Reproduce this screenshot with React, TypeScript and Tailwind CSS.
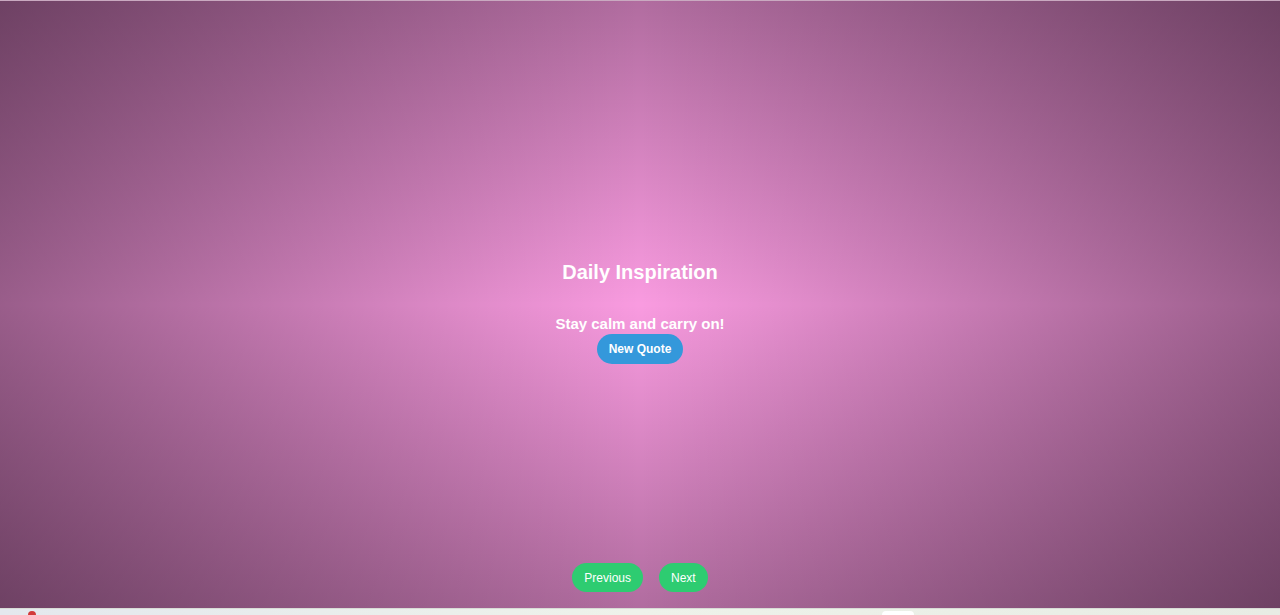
import React, { useState } from 'react';

const QUOTES = [
  'Stay calm and carry on!',
  'Every day is a fresh start.',
  'Believe you can and you are halfway there.',
];

export default function App() {
  const [index, setIndex] = useState(0);

  const nextQuote = () => setIndex((index + 1) % QUOTES.length);
  const prevQuote = () => setIndex((index - 1 + QUOTES.length) % QUOTES.length);

  return (
    <div className="h-[615px] w-full flex flex-col overflow-hidden font-['Liberation_Sans',Arial,sans-serif]">
      {/* Page */}
      <div className="flex-1 flex flex-col items-center border-t border-[#c9a9c0] bg-[#f99be0] bg-[linear-gradient(90deg,rgba(10,0,10,0.4),rgba(10,0,10,0)_50%,rgba(10,0,10,0.4)),linear-gradient(180deg,rgba(10,0,10,0.3),rgba(10,0,10,0)_50%,rgba(10,0,10,0.3))]">
        <h1 className="mt-[259px] text-[20px] leading-6 font-bold text-white">Daily Inspiration</h1>

        <p className="mt-[30px] text-[15px] leading-5 font-bold text-white">{QUOTES[index]}</p>

        <button
          onClick={nextQuote}
          className="h-[30px] px-3 rounded-full bg-[#3498db] text-white text-[12px] font-bold"
        >
          New Quote
        </button>

        {/* Navigation */}
        <div className="mt-auto mb-[16px] flex gap-4">
          <button
            onClick={prevQuote}
            className="h-[29px] px-[12px] rounded-full bg-[#2ecc71] text-white text-[12px]"
          >
            Previous
          </button>
          <button
            onClick={nextQuote}
            className="h-[29px] px-[12px] rounded-full bg-[#2ecc71] text-white text-[12px]"
          >
            Next
          </button>
        </div>
      </div>

      {/* Taskbar strip */}
      <div className="h-[7px] relative border-t border-[#d8dcd6] bg-[linear-gradient(90deg,#e4e8ee,#eef2ea_50%,#e8ece4)]">
        <span className="absolute left-[28px] top-[2px] w-2 h-2 rounded-full bg-[#d23a3a]" />
        <span className="absolute left-[882px] top-[2px] w-8 h-2 rounded-sm bg-white" />
      </div>
    </div>
  );
}
